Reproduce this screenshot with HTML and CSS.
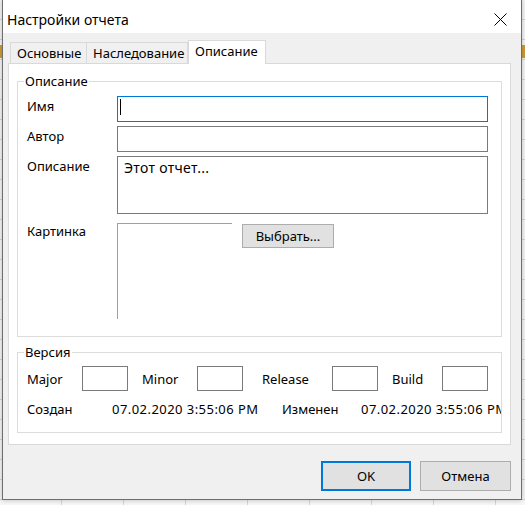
FILE: index.html
```html
<!DOCTYPE html>
<html lang="ru">
<head>
<meta charset="utf-8">
<title>Настройки отчета</title>
<link rel="stylesheet" href="styles.css">
</head>
<body>
<div class="dialog">
  <div class="titlebar">
    <span class="title">Настройки отчета</span>
    <svg class="close" width="13" height="13" viewBox="0 0 13 13"><path d="M0.5 0.5 L12.5 12.5 M12.5 0.5 L0.5 12.5" stroke="#000" stroke-width="1" fill="none"/></svg>
  </div>
  <div class="client">
    <div class="tabs">
      <div class="tab t1">Основные</div>
      <div class="tab t2">Наследование</div>
      <div class="tab t3 active">Описание</div>
    </div>
    <div class="page">
      <fieldset class="group g-desc">
        <legend>Описание</legend>
        <div class="form">
          <div class="lbl">Имя</div>
          <div class="input focus"><span class="caret"></span></div>
          <div class="lbl">Автор</div>
          <div class="input"></div>
          <div class="lbl">Описание</div>
          <div class="input area">Этот отчет...</div>
          <div class="lbl pic-lbl">Картинка</div>
          <div class="pic-row">
            <div class="picture"></div>
            <div class="btn choose">Выбрать...</div>
          </div>
        </div>
      </fieldset>
      <fieldset class="group g-ver">
        <legend>Версия</legend>
        <div class="ver-row">
          <span class="vl v-major">Major</span><div class="input small"></div>
          <span class="vl v-minor">Minor</span><div class="input small"></div>
          <span class="vl v-release">Release</span><div class="input small"></div>
          <span class="vl v-build">Build</span><div class="input small"></div>
        </div>
        <div class="date-row">
          <span class="d-created">Создан</span>
          <span class="d-date1 date">07.02.2020 3:55:06 PM</span>
          <span class="d-changed">Изменен</span>
          <span class="d-date2 date">07.02.2020 3:55:06 PM</span>
        </div>
      </fieldset>
    </div>
    <div class="buttons">
      <div class="btn dlg ok">OK</div>
      <div class="btn dlg cancel">Отмена</div>
    </div>
  </div>
</div>
</body>
</html>
```

FILE: styles.css
```css
html, body {
  margin: 0;
  height: 100%;
}
body {
  font-family: "Noto Sans", "DejaVu Sans", sans-serif;
  font-size: 13px;
  line-height: 16px;
  color: #000;
  overflow: hidden;
  background:
    linear-gradient(#d29a37, #d29a37) 0 45px / 100% 13px no-repeat,
    repeating-linear-gradient(90deg, transparent 0 61px, #d6d6d6 61px 62px),
    repeating-linear-gradient(180deg, transparent 0 19px, #d6d6d6 19px 20px),
    #f7f7f7;
}
.dialog {
  position: absolute;
  left: 2px;
  top: -1px;
  width: 520px;
  height: 501px;
  box-sizing: border-box;
  border: 1px solid #6e6e6e;
  background: #f0f0f0;
  display: flex;
  flex-direction: column;
  box-shadow: 0 0 5px rgba(0, 0, 0, 0.25);
}
.titlebar {
  height: 33px;
  flex: none;
  background: #fff;
  display: flex;
  align-items: flex-start;
  padding-left: 4px;
}
.title {
  font-size: 14px;
  line-height: 20px;
  margin-top: 10px;
}
.close {
  margin-left: auto;
  margin-right: 14px;
  margin-top: 13px;
}
.client {
  flex: 1;
  display: flex;
  flex-direction: column;
  padding: 7px 10px 8px 5px;
}
.tabs {
  display: flex;
  align-items: flex-end;
  height: 23px;
  padding-left: 2px;
  flex: none;
}
.tab {
  box-sizing: border-box;
  height: 21px;
  border: 1px solid #d9d9d9;
  border-bottom: 0;
  background: #f0f0f0;
  padding: 2px 0 0 6px;
  white-space: nowrap;
}
.t1 { width: 77px; }
.t2 { width: 102px; margin-left: -1px; }
.t3 { width: 78px; }
.tab.active {
  height: 24px;
  margin-bottom: -1px;
  background: #fff;
  position: relative;
  z-index: 1;
  padding-top: 2px;
}
.page {
  height: 382px;
  flex: none;
  box-sizing: border-box;
  border: 1px solid #d9d9d9;
  background: #fff;
  padding: 0 8px;
}
.group {
  margin: 0;
  padding: 0;
  border: 1px solid #dcdcdc;
  min-width: 0;
}
.group legend {
  padding: 0 1px;
  margin-left: 6px;
  line-height: 16px;
}
.g-desc {
  margin-top: 9px;
  padding: 7px 0 17px 0;
}
.form {
  display: grid;
  grid-template-columns: 99px 371px;
  row-gap: 4px;
}
.lbl {
  padding: 2px 0 0 9px;
}
.input {
  box-sizing: border-box;
  height: 26px;
  border: 1px solid #7a7a7a;
  background: #fff;
}
.input.focus {
  border-color: #0078d7;
  padding: 2px 0 0 2px;
}
.caret {
  display: block;
  width: 1px;
  height: 16px;
  background: #000;
}
.input.area {
  height: 58px;
  padding: 3px 6px;
  font-size: 14px;
  letter-spacing: 0.3px;
}
.pic-lbl {
  padding-top: 0;
  margin-top: 5px;
}
.pic-row {
  margin-top: 5px;
  display: flex;
  align-items: flex-start;
}
.picture {
  width: 115px;
  height: 96px;
  box-sizing: border-box;
  border-top: 1px solid #a0a0a0;
  border-left: 1px solid #a0a0a0;
}
.btn {
  box-sizing: border-box;
  background: #e1e1e1;
  border: 1px solid #adadad;
  text-align: center;
}
.choose {
  width: 92px;
  height: 24px;
  margin: 1px 0 0 10px;
  line-height: 22px;
}
.g-ver {
  margin-top: 7px;
  padding: 6px 0 15px 0;
  overflow: hidden;
}
.ver-row {
  display: flex;
  align-items: center;
  height: 25px;
  padding-left: 9px;
}
.input.small {
  width: 46px;
  height: 25px;
}
.vl { box-sizing: border-box; }
.v-major { width: 55px; }
.v-minor { width: 69px; padding-left: 14px; }
.v-release { width: 89px; padding-left: 19px; }
.v-build { width: 64px; padding-left: 14px; }
.date-row {
  display: flex;
  margin-top: 10px;
  padding-left: 9px;
  white-space: nowrap;
  overflow: hidden;
}
.date { letter-spacing: 0.45px; }
.d-created { width: 85px; flex: none; }
.d-date1 { width: 170px; flex: none; }
.d-changed { width: 79px; flex: none; }
.d-date2 { flex: none; }
.buttons {
  display: flex;
  justify-content: flex-end;
  gap: 9px;
  margin-top: 16px;
}
.dlg {
  height: 30px;
  line-height: 28px;
}
.ok {
  width: 90px;
  border: 2px solid #0078d7;
  line-height: 26px;
}
.cancel {
  width: 91px;
}
```
